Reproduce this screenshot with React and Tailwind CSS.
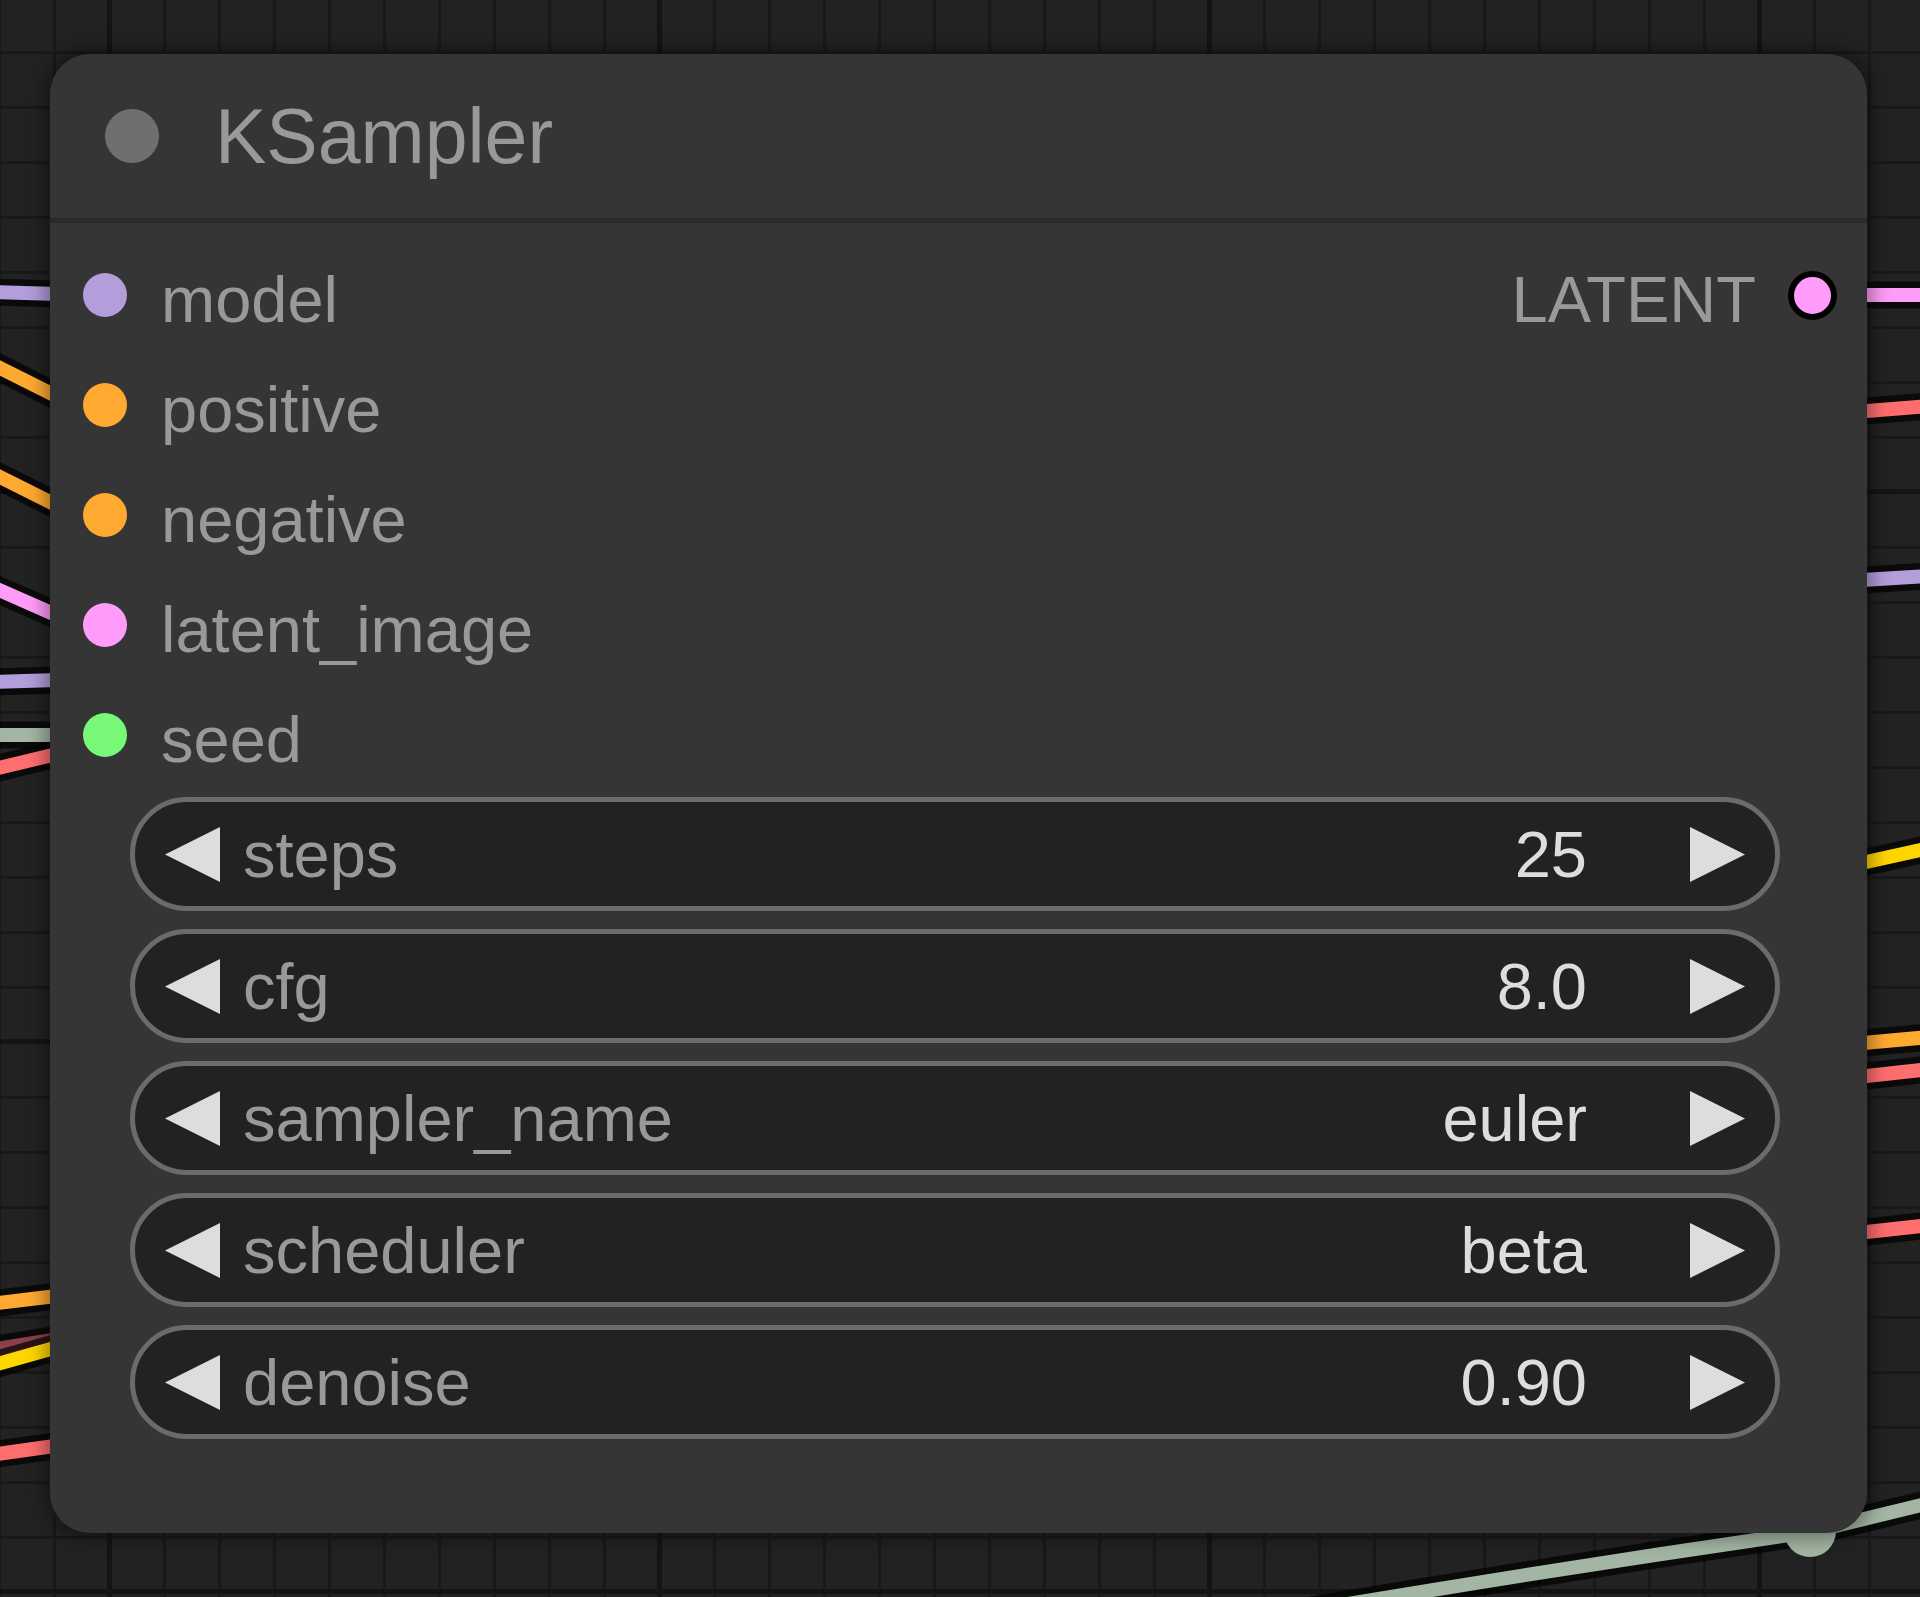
import React from "react";

const Wire = ({ d, color }) => (
  <g>
    <path d={d} stroke="rgba(0,0,0,0.7)" strokeWidth="27" fill="none" strokeLinecap="butt" />
    <path d={d} stroke={color} strokeWidth="14" fill="none" strokeLinecap="butt" />
  </g>
);

const Canvas = () => {
  const majorV = [109, 659, 1209, 1759];
  const majorH = [491, 1041, 1591];
  return (
    <svg className="absolute inset-0" width="1920" height="1597" viewBox="0 0 1920 1597">
      <defs>
        <pattern id="grid" x="53" y="51" width="55" height="55" patternUnits="userSpaceOnUse">
          <rect width="55" height="55" fill="#222222" />
          <rect width="3" height="55" fill="#191919" />
          <rect width="55" height="3" fill="#191919" />
        </pattern>
      </defs>
      <rect x="0" y="0" width="1920" height="1597" fill="url(#grid)" />
      {majorV.map((x) => (
        <rect key={"v" + x} x={x - 2} y="0" width="5" height="1597" fill="#141414" />
      ))}
      {majorH.map((y) => (
        <rect key={"h" + y} x="0" y={y - 2} width="1920" height="5" fill="#141414" />
      ))}
      {/* left wires */}
      <Wire d="M -10 292 L 90 295" color="#b39ddb" />
      <Wire d="M -10 363 L 90 413" color="#ffa931" />
      <Wire d="M -10 472 L 90 522" color="#ffa931" />
      <Wire d="M -10 586 L 90 630" color="#ff9cf9" />
      <Wire d="M -10 682 L 90 679" color="#b39ddb" />
      <Wire d="M -10 735 L 90 735" color="#a3b6a3" />
      <Wire d="M -10 770 L 90 746" color="#ff6e6e" />
      <Wire d="M -10 1304 L 90 1292" color="#ffa931" />
      <Wire d="M -10 1350 L 90 1334" color="#8a4048" />
      <Wire d="M -10 1366 L 90 1338" color="#ffd500" />
      <Wire d="M -10 1455 L 90 1441" color="#ff6e6e" />
      {/* right wires */}
      <Wire d="M 1830 295 L 1930 295" color="#ff9cf9" />
      <Wire d="M 1830 414 L 1930 406" color="#ff6e6e" />
      <Wire d="M 1830 582 L 1930 576" color="#b39ddb" />
      <Wire d="M 1830 870 L 1930 848" color="#ffd500" />
      <Wire d="M 1830 1046 L 1930 1037" color="#ffa931" />
      <Wire d="M 1830 1080 L 1930 1069" color="#ff6e6e" />
      <Wire d="M 1830 1236 L 1930 1225" color="#ff6e6e" />
      <Wire d="M 1300 1612 Q 1560 1568 1810 1532 L 1930 1503" color="#a3b6a3" />
      <circle cx="1810" cy="1531" r="26" fill="#a3b6a3" />
    </svg>
  );
};

const Arrow = ({ dir }) => (
  <svg width="55" height="55" viewBox="0 0 55 55" className="shrink-0">
    {dir === "left" ? (
      <polygon points="55,0 0,27.5 55,55" fill="#dddddd" />
    ) : (
      <polygon points="0,0 55,27.5 0,55" fill="#dddddd" />
    )}
  </svg>
);

const inputs = [
  { name: "model", color: "bg-[#b39ddb]" },
  { name: "positive", color: "bg-[#ffa931]" },
  { name: "negative", color: "bg-[#ffa931]" },
  { name: "latent_image", color: "bg-[#ff9cf9]" },
  { name: "seed", color: "bg-[#77f877]" },
];

const widgets = [
  { name: "steps", value: "25" },
  { name: "cfg", value: "8.0" },
  { name: "sampler_name", value: "euler" },
  { name: "scheduler", value: "beta" },
  { name: "denoise", value: "0.90" },
];

export default function App() {
  return (
    <div className="relative w-[1920px] h-[1597px] overflow-hidden bg-[#222222] pt-[54px] pl-[50px] font-['Liberation_Sans',Arial,sans-serif]">
      <Canvas />
      <div className="relative z-10 w-[1817px] rounded-[40px] bg-[#353535] shadow-[0_0_18px_6px_rgba(0,0,0,0.35)]">
        <div className="h-[164px] flex items-center pl-[55px]">
          <div className="w-[54px] h-[54px] rounded-full bg-[#6f6f6f]" />
          <div className="ml-[56px] text-[77px] leading-none text-[#999999]">KSampler</div>
        </div>
        <div className="h-[5px] bg-[#2a2a2a]" />
        <div className="pt-[17px] pb-[94px]">
          {inputs.map((inp, i) => (
            <div key={inp.name} className="h-[110px] flex items-center justify-between pl-[33px] pr-[30px]">
              <div className="flex items-center">
                <div className={"w-[44px] h-[44px] rounded-full " + inp.color} />
                <div className="ml-[34px] pt-[9px] text-[65px] leading-none text-[#999999]">{inp.name}</div>
              </div>
              {i === 0 && (
                <div className="flex items-center">
                  <div className="mr-[32px] pt-[9px] text-[65px] leading-none text-[#999999]">LATENT</div>
                  <div className="w-[49px] h-[49px] rounded-full bg-[#ff9cf9] border-[6px] border-black" />
                </div>
              )}
            </div>
          ))}
          <div className="mt-[7px] ml-[80px] mr-[87px] flex flex-col gap-[18px]">
            {widgets.map((w) => (
              <div
                key={w.name}
                className="h-[114px] rounded-full border-[5px] border-[#6b6b6b] bg-[#222222] flex items-center pl-[30px] pr-[30px]"
              >
                <Arrow dir="left" />
                <div className="ml-[23px] flex-1 text-[65px] leading-none text-[#999999]">{w.name}</div>
                <div className="mr-[103px] text-[65px] leading-none text-[#dddddd]">{w.value}</div>
                <Arrow dir="right" />
              </div>
            ))}
          </div>
        </div>
      </div>
    </div>
  );
}
